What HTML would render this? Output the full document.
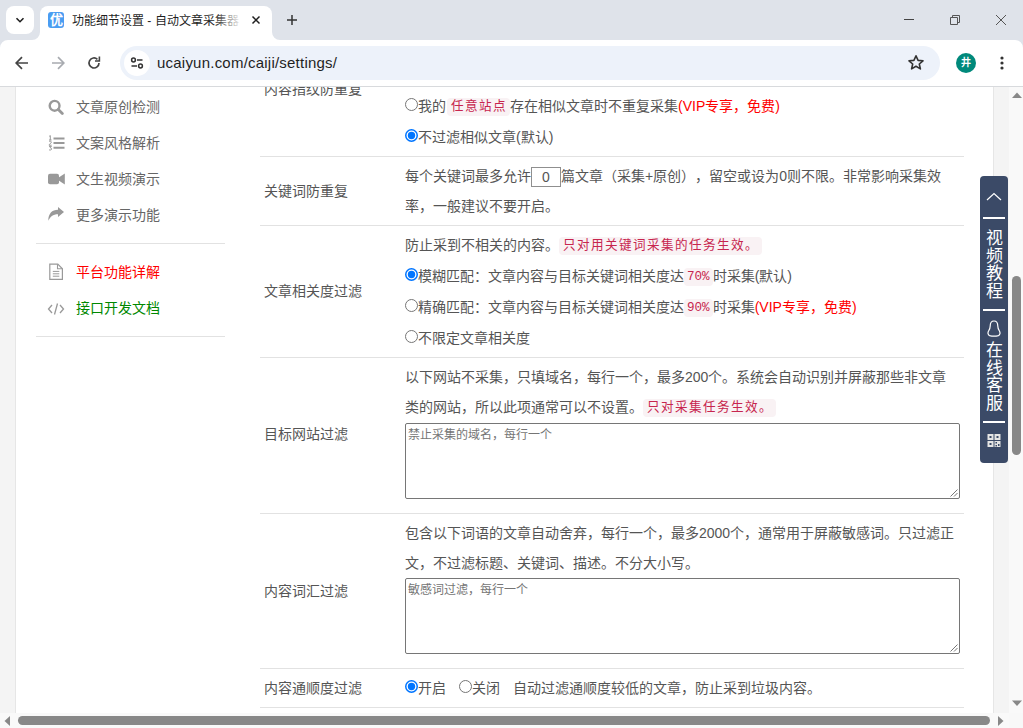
<!DOCTYPE html>
<html lang="zh-CN"><head><meta charset="utf-8">
<style>
*{margin:0;padding:0;box-sizing:border-box}
html,body{width:1023px;height:728px;overflow:hidden;background:#fff;font-family:"Liberation Sans",sans-serif;text-spacing-trim:space-all}
.a{position:absolute}
#tabs{left:0;top:0;width:1023px;height:40px;background:#dfe3ea}
#toolbar{left:0;top:40px;width:1023px;height:46px;background:#fff}
#tbline{left:0;top:86px;width:1023px;height:1px;background:#d8dadd}
#omni{left:120px;top:46px;width:820px;height:34px;border-radius:17px;background:#edf2fa}
#page{left:0;top:87px;width:1023px;height:641px;background:#f4f4f4}
#wrap{left:15px;top:87px;width:979px;height:626px;background:#fff;border-left:1px solid #e6e6e6;border-right:1px solid #e6e6e6}
.t{position:absolute;white-space:nowrap;font-size:14px;line-height:20px;color:#555}
.side{color:#666}
.hr{position:absolute;height:1px;background:#e2e2e2}
code{font-family:"Liberation Mono",monospace;font-weight:300;font-size:12.6px;line-height:14px;color:#c7254e;background:#f9f2f4;border-radius:4px;padding:2px 4px;display:inline-block;vertical-align:1px}
code.z{letter-spacing:1px;padding:2px 3px 2px 4px}
code.n{padding:2px 3px}
.red{color:#f00}
.rd{vertical-align:0px}
.radio{display:inline-block;width:13px;height:13px;border-radius:50%;border:1px solid #767676;vertical-align:0px;margin:0 0 0 0;background:#fff}
.radio.on{border:none;background:radial-gradient(circle closest-side,#0075ff 0,#0075ff 3.5px,#fff 4.1px,#fff 4.6px,#0075ff 5.1px,#0075ff 6.1px,rgba(0,117,255,0) 6.6px)}
.inp{position:relative;display:inline-block;width:30px;height:20px;border:1px solid #8f8f8f;text-align:center;line-height:18px;vertical-align:-4px;top:-3.5px}
.ta{position:absolute;border:1px solid #767676;border-radius:2px;background:#fff}
.ph{position:absolute;left:2px;top:1px;font-size:12px;color:#757575;white-space:nowrap}
#sb{left:1009px;top:87px;width:14px;height:626px;background:#f9f9f9}
#hsb{left:0;top:713px;width:1009px;height:15px;background:#f9f9f9}
</style></head><body>
<!-- chrome tab strip -->
<div id="tabs" class="a"></div>
<div class="a" style="left:6px;top:6px;width:28px;height:28px;border-radius:8px;background:#fff"></div>
<svg class="a" style="left:14px;top:14px" width="12" height="12" viewBox="0 0 12 12"><path d="M2.5 4.2 L6 7.7 L9.5 4.2" fill="none" stroke="#1f1f1f" stroke-width="1.6"/></svg>
<!-- active tab -->
<div class="a" style="left:40px;top:6px;width:232px;height:40px;border-radius:8px 8px 0 0;background:#fff"></div>
<svg class="a" style="left:32px;top:32px" width="8" height="8"><path d="M0 8 A8 8 0 0 0 8 0 L8 8 Z" fill="#fff"/></svg>
<svg class="a" style="left:272px;top:32px" width="8" height="8"><path d="M8 8 A8 8 0 0 1 0 0 L0 8 Z" fill="#fff"/></svg>
<div class="a" style="left:48px;top:12px;width:16px;height:16px;border-radius:3px;background:#4a9df2;color:#fff;font-size:13px;line-height:16px;text-align:center;font-weight:bold">优</div>
<div class="a" style="left:72px;top:11px;width:170px;height:20px;overflow:hidden;white-space:nowrap;font-size:12px;line-height:20px;color:#1f1f1f">功能细节设置 - 自动文章采集器</div>
<div class="a" style="left:214px;top:8px;width:30px;height:24px;background:linear-gradient(to right,rgba(255,255,255,0),rgba(255,255,255,.85) 80%,#fff)"></div>
<svg class="a" style="left:250px;top:14px" width="12" height="12"><path d="M2.5 2.5 L9.5 9.5 M9.5 2.5 L2.5 9.5" stroke="#1f1f1f" stroke-width="1.5"/></svg>
<svg class="a" style="left:285px;top:13px" width="14" height="14"><path d="M7 2 V12 M2 7 H12" stroke="#333" stroke-width="1.5"/></svg>
<!-- window controls -->
<div class="a" style="left:904px;top:19px;width:10px;height:1px;background:#444"></div>
<svg class="a" style="left:948px;top:13px" width="14" height="14"><path d="M2.5 4.5 h7 v7 h-7 z M4.5 4.5 v-2 h7 v7 h-2" fill="none" stroke="#555" stroke-width="1"/></svg>
<svg class="a" style="left:995px;top:14px" width="12" height="12"><path d="M1 1 L11 11 M11 1 L1 11" stroke="#555" stroke-width="1"/></svg>
<!-- toolbar -->
<div id="toolbar" class="a"></div>
<div id="tbline" class="a"></div>
<svg class="a" style="left:0;top:40px" width="8" height="8"><path d="M0 0 H8 A8 8 0 0 0 0 8 Z" fill="#dfe3ea"/></svg>
<svg class="a" style="left:1015px;top:40px" width="8" height="8"><path d="M8 0 H0 A8 8 0 0 1 8 8 Z" fill="#dfe3ea"/></svg>
<svg class="a" style="left:13px;top:54px" width="18" height="18" viewBox="0 0 18 18"><path d="M15 9 H3.5 M9 3.2 L3.2 9 L9 14.8" fill="none" stroke="#444" stroke-width="1.7"/></svg>
<svg class="a" style="left:49px;top:54px" width="18" height="18" viewBox="0 0 18 18"><path d="M3 9 H14.5 M9 3.2 L14.8 9 L9 14.8" fill="none" stroke="#a8abb0" stroke-width="1.7"/></svg>
<svg class="a" style="left:85px;top:54px" width="18" height="18" viewBox="0 0 18 18"><path d="M14 9 A5 5 0 1 1 12.4 5.3" fill="none" stroke="#444" stroke-width="1.7"/><path d="M14.4 2.6 V7 H10" fill="none" stroke="#444" stroke-width="1.6"/></svg>
<div id="omni" class="a"></div>
<div class="a" style="left:124px;top:50px;width:26px;height:26px;border-radius:13px;background:#fff"></div>
<svg class="a" style="left:128px;top:54px" width="18" height="18" viewBox="0 0 18 18"><circle cx="5.5" cy="6" r="1.9" fill="none" stroke="#333" stroke-width="1.5"/><path d="M9 6 H14.5 M3.5 12 H9" stroke="#333" stroke-width="1.5"/><circle cx="12.5" cy="12" r="1.9" fill="none" stroke="#333" stroke-width="1.5"/></svg>
<div class="a" style="left:157px;top:53px;font-size:15px;line-height:20px;color:#1f1f1f;white-space:nowrap;letter-spacing:0.22px">ucaiyun.com/caiji/settings/</div>
<svg class="a" style="left:906px;top:53px" width="20" height="20" viewBox="0 0 20 20"><path d="M10 2.8 L12.1 7.4 L17 7.8 L13.3 11 L14.4 15.9 L10 13.3 L5.6 15.9 L6.7 11 L3 7.8 L7.9 7.4 Z" fill="none" stroke="#333" stroke-width="1.6" stroke-linejoin="round"/></svg>
<div class="a" style="left:956px;top:53px;width:20px;height:20px;border-radius:10px;background:#00897b;color:#fff;font-size:10px;line-height:20px;text-align:center;font-weight:bold">井</div>
<svg class="a" style="left:998px;top:55px" width="8" height="16"><circle cx="4" cy="3" r="1.6" fill="#333"/><circle cx="4" cy="8" r="1.6" fill="#333"/><circle cx="4" cy="13" r="1.6" fill="#333"/></svg>

<!-- page -->
<div id="page" class="a"></div>
<div id="wrap" class="a"></div>

<!-- sidebar -->
<svg class="a" style="left:48px;top:99px" width="16" height="16" viewBox="0 0 16 16"><circle cx="6.6" cy="6.8" r="4.9" fill="none" stroke="#999" stroke-width="2.4"/><path d="M10.3 10.5 L14.3 14.5" stroke="#999" stroke-width="2.8" stroke-linecap="round"/></svg>
<div class="t side" style="left:76px;top:97px">文章原创检测</div>
<svg class="a" style="left:48px;top:135px" width="17" height="16" viewBox="0 0 17 16"><path d="M5.5 3.5 H16.5 M5.5 8 H16.5 M5.5 12.8 H16.5" stroke="#999" stroke-width="2"/><path d="M1.2 1.3 L2.3 0.6 V5 M1 5 H3.6 M1 6.6 C1.6 6 3.4 6 3.4 7.2 C3.4 8.2 1 9 1 10.2 H3.6 M1 11.4 H3.4 L2 12.8 C3.2 12.7 3.6 13.3 3.6 14 C3.6 15 2 15.3 1 14.8" fill="none" stroke="#999" stroke-width="1"/></svg>
<div class="t side" style="left:76px;top:133px">文案风格解析</div>
<svg class="a" style="left:48px;top:173px" width="17" height="12" viewBox="0 0 17 12"><rect x="0" y="0.7" width="11" height="10.6" rx="2" fill="#999"/><path d="M10 5 L16.8 0.5 V11.5 L10 7 Z" fill="#999"/></svg>
<div class="t side" style="left:76px;top:169px">文生视频演示</div>
<svg class="a" style="left:48px;top:207px" width="16" height="15" viewBox="0 0 16 15"><path d="M16 5 L10 0 V2.7 C4 2.7 0.3 6.5 0.3 13.8 C2 9.8 5 7.2 10 7.2 V10 Z" fill="#999"/></svg>
<div class="t side" style="left:76px;top:205px">更多演示功能</div>
<div class="hr" style="left:36px;top:243px;width:189px"></div>
<svg class="a" style="left:48px;top:263px" width="16" height="17" viewBox="0 0 16 17"><path d="M1.8 1.2 H9.8 L14.4 5.8 V16.4 H1.8 Z" fill="none" stroke="#999" stroke-width="1.2"/><path d="M9.5 1.2 V5.8 H14.4" fill="none" stroke="#999" stroke-width="1.1"/><path d="M4.8 8.4 H11.3 M4.8 10.8 H11.3 M4.8 13.2 H11.3" stroke="#999" stroke-width="1"/></svg>
<div class="t" style="left:76px;top:262px;color:#f00">平台功能详解</div>
<svg class="a" style="left:47px;top:301px" width="18" height="16" viewBox="0 0 18 16"><path d="M5 4 L1.5 8 L5 12 M13 4 L16.5 8 L13 12 M10.5 2.5 L7.5 13.5" fill="none" stroke="#999" stroke-width="1.3"/></svg>
<div class="t" style="left:76px;top:298px;color:#080">接口开发文档</div>
<div class="hr" style="left:36px;top:336px;width:189px"></div>

<!-- main table -->
<div class="t" style="left:264px;top:79px;clip-path:inset(8px 0 0 0)">内容指纹防重复</div>
<div class="t" style="left:405px;top:96px"><svg class="rd" width="13" height="13" viewBox="0 0 13 13"><circle cx="6.5" cy="6.5" r="6" fill="#fff" stroke="#767676" stroke-width="1"/></svg>我的<code class="z" style="margin-left:1px">任意站点</code>存在相似文章时不重复采集<span class="red">(VIP专享，免费)</span></div>
<div class="t" style="left:405px;top:127px"><svg class="rd" width="13" height="13" viewBox="0 0 13 13"><circle cx="6.5" cy="6.5" r="5.75" fill="#fff" stroke="#0075ff" stroke-width="1.5"/><circle cx="6.5" cy="6.5" r="3.7" fill="#0075ff"/></svg>不过滤相似文章(默认)</div>
<div class="hr" style="left:260px;top:156px;width:704px"></div>

<div class="t" style="left:264px;top:181px">关键词防重复</div>
<div class="t" style="left:405px;top:166px">每个关键词最多允许<span class="inp">0</span>篇文章（采集+原创），留空或设为0则不限。非常影响采集效</div>
<div class="t" style="left:405px;top:196px">率，一般建议不要开启。</div>
<div class="hr" style="left:260px;top:225px;width:704px"></div>

<div class="t" style="left:264px;top:281px">文章相关度过滤</div>
<div class="t" style="left:405px;top:235px">防止采到不相关的内容。<code class="z" style="margin-left:0px">只对用关键词采集的任务生效。</code></div>
<div class="t" style="left:405px;top:266px"><svg class="rd" width="13" height="13" viewBox="0 0 13 13"><circle cx="6.5" cy="6.5" r="5.75" fill="#fff" stroke="#0075ff" stroke-width="1.5"/><circle cx="6.5" cy="6.5" r="3.7" fill="#0075ff"/></svg>模糊匹配：文章内容与目标关键词相关度达<code class="n">70%</code>时采集(默认)</div>
<div class="t" style="left:405px;top:297px"><svg class="rd" width="13" height="13" viewBox="0 0 13 13"><circle cx="6.5" cy="6.5" r="6" fill="#fff" stroke="#767676" stroke-width="1"/></svg>精确匹配：文章内容与目标关键词相关度达<code class="n">90%</code>时采集<span class="red">(VIP专享，免费)</span></div>
<div class="t" style="left:405px;top:328px"><svg class="rd" width="13" height="13" viewBox="0 0 13 13"><circle cx="6.5" cy="6.5" r="6" fill="#fff" stroke="#767676" stroke-width="1"/></svg>不限定文章相关度</div>
<div class="hr" style="left:260px;top:357px;width:704px"></div>

<div class="t" style="left:264px;top:424px">目标网站过滤</div>
<div class="t" style="left:405px;top:367px">以下网站不采集，只填域名，每行一个，最多200个。系统会自动识别并屏蔽那些非文章</div>
<div class="t" style="left:405px;top:397px">类的网站，所以此项通常可以不设置。<code class="z">只对采集任务生效。</code></div>
<div class="ta" style="left:405px;top:423px;width:555px;height:76px"><div class="ph">禁止采集的域名，每行一个</div><svg style="position:absolute;right:1px;bottom:1px" width="9" height="9"><path d="M8.5 1.5 L1.5 8.5 M8.5 5 L5 8.5" stroke="#777" stroke-width="1"/></svg></div>
<div class="hr" style="left:260px;top:513px;width:704px"></div>

<div class="t" style="left:264px;top:581px">内容词汇过滤</div>
<div class="t" style="left:405px;top:523px">包含以下词语的文章自动舍弃，每行一个，最多2000个，通常用于屏蔽敏感词。只过滤正</div>
<div class="t" style="left:405px;top:553px">文，不过滤标题、关键词、描述。不分大小写。</div>
<div class="ta" style="left:405px;top:578px;width:555px;height:76px"><div class="ph">敏感词过滤，每行一个</div><svg style="position:absolute;right:1px;bottom:1px" width="9" height="9"><path d="M8.5 1.5 L1.5 8.5 M8.5 5 L5 8.5" stroke="#777" stroke-width="1"/></svg></div>
<div class="hr" style="left:260px;top:668px;width:704px"></div>

<div class="t" style="left:264px;top:678px">内容通顺度过滤</div>
<div class="t" style="left:405px;top:678px"><svg class="rd" width="13" height="13" viewBox="0 0 13 13"><circle cx="6.5" cy="6.5" r="5.75" fill="#fff" stroke="#0075ff" stroke-width="1.5"/><circle cx="6.5" cy="6.5" r="3.7" fill="#0075ff"/></svg>开启<span style="display:inline-block;width:13px"></span><svg class="rd" width="13" height="13" viewBox="0 0 13 13"><circle cx="6.5" cy="6.5" r="6" fill="#fff" stroke="#767676" stroke-width="1"/></svg>关闭<span style="display:inline-block;width:13px"></span>自动过滤通顺度较低的文章，防止采到垃圾内容。</div>
<div class="hr" style="left:260px;top:707px;width:704px"></div>

<!-- float panel -->
<div class="a" style="left:980px;top:176px;width:28px;height:287px;background:#3b4a67;border-radius:4px"></div>
<svg class="a" style="left:985px;top:190px" width="18" height="14"><path d="M2 10 L9 3.5 L16 10" fill="none" stroke="#fff" stroke-width="1.2"/></svg>
<div class="a" style="left:983px;top:217px;width:22px;height:1.5px;background:#fff"></div>
<div class="a" style="left:985px;top:230px;width:18px;font-size:17px;line-height:17.5px;color:#fff;text-align:center">视<br>频<br>教<br>程</div>
<div class="a" style="left:983px;top:309px;width:22px;height:1.5px;background:#fff"></div>
<svg class="a" style="left:986px;top:320px" width="16" height="17" viewBox="0 0 16 17"><path d="M8 1 C5.2 1 4.2 3.3 4.2 6 C4.2 8.2 3.6 9.6 2.6 11 C1.6 12.4 1.8 15 3.6 15.6 C5.4 16.1 10.6 16.1 12.4 15.6 C14.2 15 14.4 12.4 13.4 11 C12.4 9.6 11.8 8.2 11.8 6 C11.8 3.3 10.8 1 8 1 Z" fill="none" stroke="#fff" stroke-width="1.2"/></svg>
<div class="a" style="left:985px;top:342px;width:18px;font-size:17px;line-height:17.5px;color:#fff;text-align:center">在<br>线<br>客<br>服</div>
<div class="a" style="left:983px;top:421px;width:22px;height:1.5px;background:#fff"></div>
<svg class="a" style="left:987px;top:434px" width="14" height="13" viewBox="0 0 14 13"><rect x="0.5" y="0" width="6" height="6" fill="#e4e4e4"/><rect x="7.5" y="0" width="6" height="6" fill="#e4e4e4"/><rect x="0.5" y="7" width="6" height="6" fill="#e4e4e4"/><rect x="7.5" y="7" width="6" height="6" fill="#e4e4e4"/><rect x="2.5" y="2" width="2" height="2" fill="#3b4a67"/><rect x="9.5" y="2" width="2" height="2" fill="#3b4a67"/><rect x="2.5" y="9" width="2" height="2" fill="#3b4a67"/><path d="M8.5 8 h1.5 v1.5 h-1.5z M11 10 h1.5 v2 h-1.5z M8.5 11 h1.5 v1.5 h-1.5z" fill="#3b4a67"/></svg>

<!-- scrollbars -->
<div id="sb" class="a"></div>
<svg class="a" style="left:1012px;top:92px" width="10" height="7"><path d="M0 6 L5 0.5 L10 6 Z" fill="#888"/></svg>
<div class="a" style="left:1012px;top:276px;width:9px;height:179px;border-radius:4.5px;background:#888"></div>
<svg class="a" style="left:1012px;top:700px" width="10" height="7"><path d="M0 0.5 L5 6 L10 0.5 Z" fill="#888"/></svg>
<div id="hsb" class="a"></div>
<div class="a" style="left:1009px;top:713px;width:14px;height:15px;background:#f8f8f8"></div>
<svg class="a" style="left:4px;top:716px" width="7" height="10"><path d="M6 0 L0.5 5 L6 10 Z" fill="#888"/></svg>
<div class="a" style="left:18px;top:716px;width:972px;height:9px;border-radius:4.5px;background:#888"></div>
<svg class="a" style="left:997px;top:716px" width="7" height="10"><path d="M1 0 L6.5 5 L1 10 Z" fill="#888"/></svg>
</body></html>
